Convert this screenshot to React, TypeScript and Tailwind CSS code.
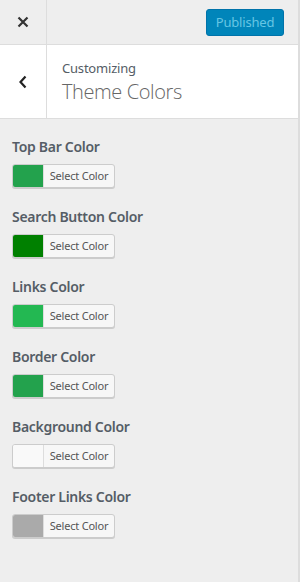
import React from "react";

const items = [
  { label: "Top Bar Color", color: "#23a24d" },
  { label: "Search Button Color", color: "#008000" },
  { label: "Links Color", color: "#23b852" },
  { label: "Border Color", color: "#23a24d" },
  { label: "Background Color", color: "#f9f9f9" },
  { label: "Footer Links Color", color: "#aaaaaa" },
];

export default function App() {
  return (
    <div
      className="w-[300px] h-[582px] bg-[#eeeeee] border-r-2 border-[#dddddd] flex flex-col text-[#555d66]"
      style={{ fontFamily: '"Segoe UI", "Noto Sans", sans-serif' }}
    >
      <div className="h-[45px] flex items-stretch border-b border-[#dddddd] shrink-0">
        <div className="w-[47px] border-r border-[#dddddd] flex items-center justify-center">
          <svg width="12" height="12" viewBox="0 0 12 12">
            <path d="M1.5 1.5 L10.5 10.5 M10.5 1.5 L1.5 10.5" stroke="#333" strokeWidth="2.2" />
          </svg>
        </div>
        <div className="flex-1 flex items-start justify-end pt-[9px] pr-[14px]">
          <div className="w-[78px] h-[27px] rounded-[3px] bg-[#0085ba] border border-[#0073aa] text-[#66c6e4] text-[13px] tracking-[-0.2px] flex items-center justify-center">
            Published
          </div>
        </div>
      </div>
      <div className="h-[74px] bg-white flex items-stretch border-b border-[#dddddd] shrink-0">
        <div className="w-[47px] border-r border-[#dddddd] flex items-center justify-center">
          <svg width="10" height="14" viewBox="0 0 10 14">
            <path d="M7.5 1.5 L2.5 7 L7.5 12.5" stroke="#222" strokeWidth="2.2" fill="none" />
          </svg>
        </div>
        <div className="flex-1 pl-[15px] pt-[14px]">
          <div className="text-[13px] leading-[18px] tracking-[-0.2px] text-[#555d66]">Customizing</div>
          <div
            className="text-[20px] leading-[26px] font-light tracking-[-0.4px] text-[#666] mt-[2px]"
            style={{ fontFamily: '"Open Sans", "Noto Sans", sans-serif' }}
          >
            Theme Colors
          </div>
        </div>
      </div>
      <div className="flex flex-col pl-[12px] pt-[19px] gap-[20px]">
        {items.map((it) => (
          <div key={it.label} className="flex flex-col">
            <div className="text-[14px] leading-[18px] font-semibold tracking-[-0.3px] text-[#555d66]">{it.label}</div>
            <div className="mt-[8px] flex h-[24px] w-[103px] rounded-[3px] border border-[#cccccc] shadow-[0_1px_0_#cccccc] overflow-hidden bg-[#f7f7f7]">
              <div className="w-[30px] h-full" style={{ backgroundColor: it.color }} />
              <div className="flex-1 border-l border-[#dddddd] text-[11px] tracking-[-0.2px] text-[#555] flex items-center justify-center">
                Select Color
              </div>
            </div>
          </div>
        ))}
      </div>
    </div>
  );
}
